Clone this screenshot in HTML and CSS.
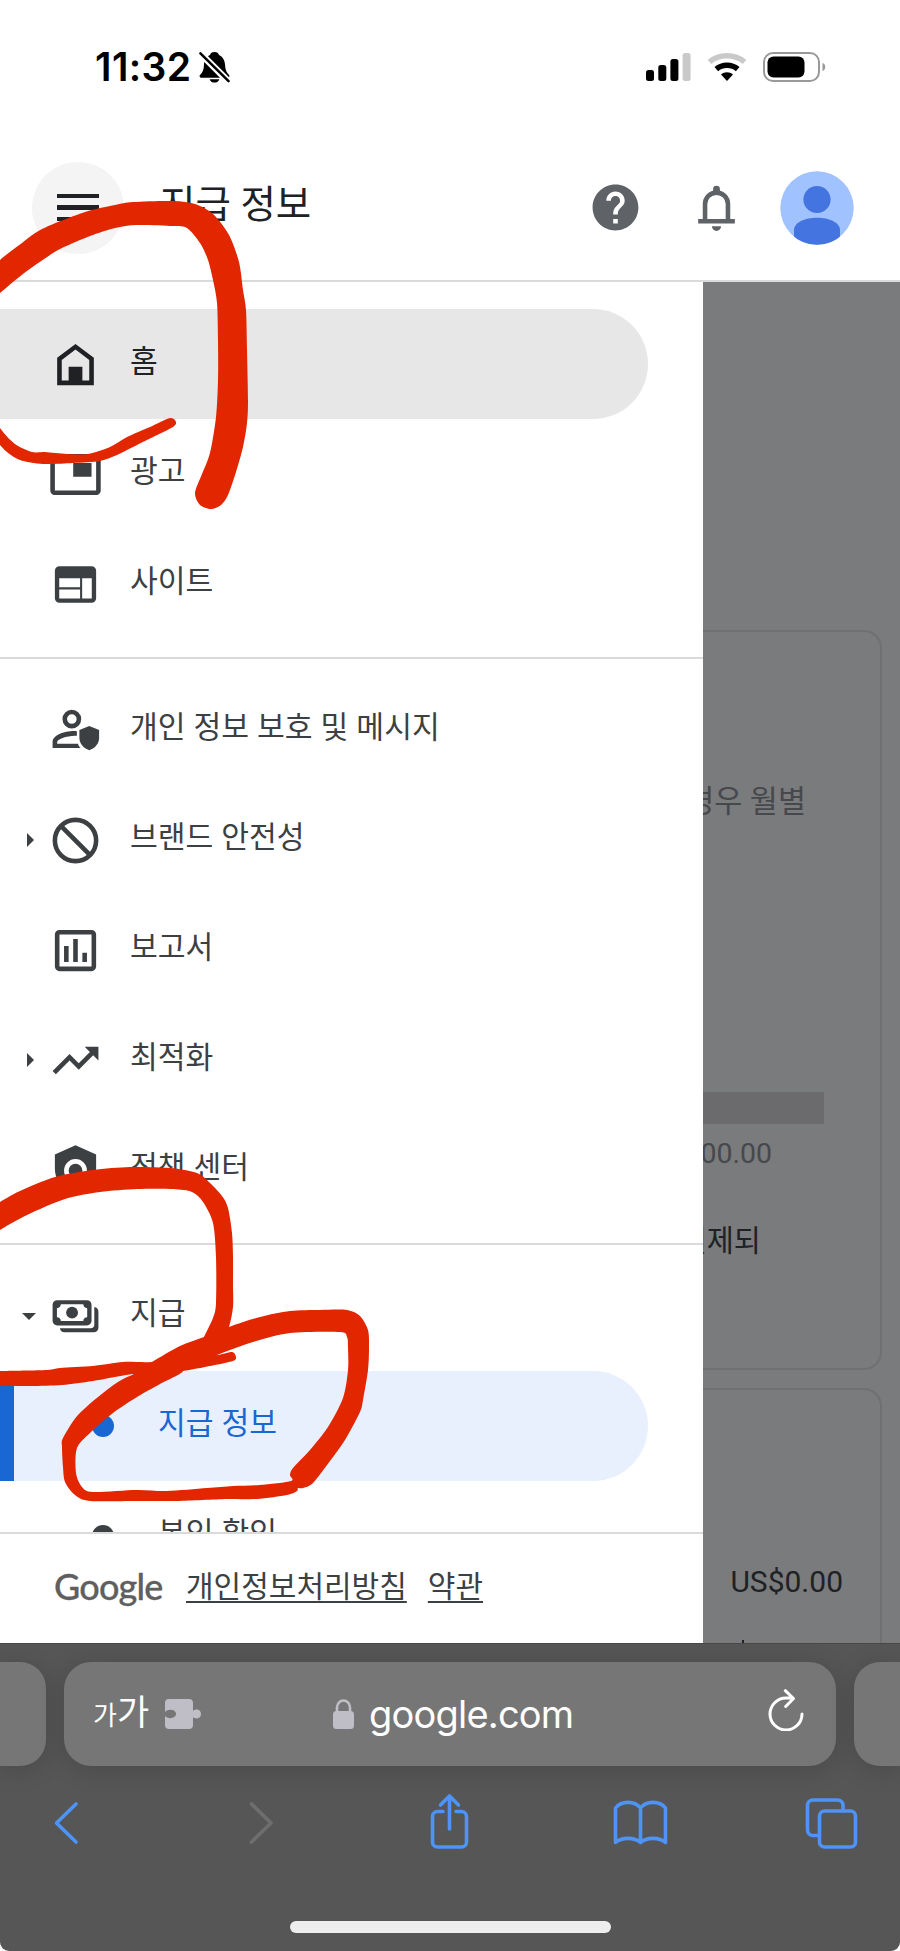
FILE: index.html
```html
<!DOCTYPE html>
<html lang="ko">
<head>
<meta charset="utf-8">
<title>지급 정보</title>
<link rel="stylesheet" href="styles.css">
</head>
<body>
<div class="phone">
  <header class="top">
    <div class="status">
      <span class="time">11:32</span>
      <svg class="mute" viewBox="0 0 32 34"><path d="M16 1c2.600 0 4.200 1.300 4.600 3 4.400 1.900 6 6 6.300 10.500.2 5 1.500 8 4.100 10.200.8.900.4 2.800-1.500 2.800H2.500C.6 27.500.2 25.600 1 24.700 3.800 22.300 5 19.300 5.100 14.500 5.400 10 7 5.900 11.400 4 11.800 2.300 13.400 1 16 1zM11 29h10c-.6 2.200-2.600 3.600-5 3.600s-4.400-1.400-5-3.600z"/><path class="mute-gap" d="M1 2l30 30"/><path class="mute-line" d="M1.500 2.500l29 28.500"/></svg>
      <svg class="signal" viewBox="0 0 45 30"><rect x="0" y="18" width="8" height="11" rx="2.500"/><rect x="12.300" y="13" width="8" height="16" rx="2.500"/><rect x="24.400" y="7" width="8" height="22" rx="2.500"/><rect class="faint" x="36.600" y="1" width="8" height="28" rx="2.500"/></svg>
      <svg class="wifi" viewBox="0 0 40 30"><path class="arc faint-line" d="M2.500 10C12 1.700 28 1.700 37.500 10"/><path class="arc" d="M9.300 17.200c6-5.200 15.400-5.200 21.400 0"/><path d="M20 29l-6-6.500c3.500-3 8.500-3 12 0z"/></svg>
      <svg class="battery" viewBox="0 0 63 30"><rect class="shell" x="1" y="1" width="55" height="28" rx="9"/><rect x="4.500" y="4.500" width="37" height="21" rx="6"/><path class="cap" d="M59.500 11c3.700 1 3.700 7 0 8z"/></svg>
    </div>
    <div class="appbar">
      <button class="menu-btn" aria-label="메뉴"><i></i><i></i><i></i></button>
      <h1>지급 정보</h1>
      <svg class="ico help" viewBox="0 0 24 24"><path d="M12 2C6.480 2 2 6.480 2 12s4.480 10 10 10 10-4.480 10-10S17.520 2 12 2zm1 17h-2v-2h2v2zm2.070-7.750l-.9.920C13.450 12.900 13 13.500 13 15h-2v-.5c0-1.100.45-2.100 1.170-2.830l1.240-1.260c.37-.36.590-.86.590-1.410 0-1.100-.9-2-2-2s-2 .9-2 2H8c0-2.210 1.790-4 4-4s4 1.790 4 4c0 .88-.36 1.680-.93 2.250z"/></svg>
      <svg class="ico bell" viewBox="0 0 24 24"><path class="line" d="M7 17.300V10.500a5 5 0 0 1 10 0v6.800"/><path d="M4 17h16v2H4zM10.500 5.500V4a1.500 1.500 0 0 1 3 0v1.500zM10 20.200h4a2 2 0 0 1-4 0z"/></svg>
      <svg class="avatar" viewBox="0 0 74 74"><defs><clipPath id="face"><circle cx="37" cy="37" r="36.700"/></clipPath></defs><g clip-path="url(#face)"><path class="av-bg" d="M0 0h74v74H0z"/><circle cx="37" cy="28.500" r="13.600"/><path d="M14 74V59c0-7.500 11-12.300 23-12.300S60 51.500 60 59v15z"/></g></svg>
    </div>
  </header>

  <div class="stage">
    <main class="page">
      <section class="card card-a">
        <p class="note">경우 월별</p>
        <div class="meter"></div>
        <p class="amount">00.00</p>
        <p class="sum">결제되</p>
      </section>
      <section class="card card-b">
        <p class="total">US$0.00</p>
        <i class="tick"></i>
      </section>
    </main>

    <nav class="drawer">
      <div class="list">
        <a class="row home"><span class="caret"></span><svg class="ico" viewBox="0 0 24 24"><path fill-rule="evenodd" d="M12 3L4 9v12h16V9zM6 19V10l6-4.500 6 4.500v9h-3v-6H9v6z"/></svg><span>홈</span></a>
        <a class="row"><span class="caret"></span><svg class="ico" viewBox="0 0 24 24"><path d="M19 7h-8v6h8V7zm2-4H3c-1.100 0-2 .9-2 2v14c0 1.100.9 1.980 2 1.980h18c1.100 0 2-.88 2-1.980V5c0-1.100-.9-2-2-2zm0 16.010H3V4.980h18v14.030z"/></svg><span>광고</span></a>
        <a class="row"><span class="caret"></span><svg class="ico" viewBox="0 0 24 24"><path fill-rule="evenodd" d="M5 4h14a2 2 0 0 1 2 2v12a2 2 0 0 1-2 2H5a2 2 0 0 1-2-2V6a2 2 0 0 1 2-2zM4.900 9.300v3.900H14V9.300zm0 4.900v3.900H14v-3.900zM14.900 9.300v8.800h4.200V9.300z"/></svg><span>사이트</span></a>
        <hr>
        <a class="row"><span class="caret"></span><svg class="ico" viewBox="0 0 24 24"><circle class="line" cx="10.400" cy="7" r="3.100"/><path d="M12.600 12.300c-4.700-.4-10.600 1.600-10.600 4.700v2.600h12.200c-.6-.6-.9-1.100-1.100-1.800H4V17c0-1.100 4.200-2.900 8.600-2.700z"/><path d="M18 10l4.300 1.800v3.500c0 2.300-1.700 4.500-4.300 5.300-2.600-.8-4.300-3-4.300-5.300v-3.500z"/></svg><span>개인 정보 보호 및 메시지</span></a>
        <a class="row"><span class="caret right"></span><svg class="ico" viewBox="0 0 24 24"><circle class="line" cx="12" cy="12" r="9"/><path class="line" d="M5.500 5.500l13 13"/></svg><span>브랜드 안전성</span></a>
        <a class="row"><span class="caret"></span><svg class="ico" viewBox="0 0 24 24"><path fill-rule="evenodd" d="M5 3h14a2 2 0 0 1 2 2v14a2 2 0 0 1-2 2H5a2 2 0 0 1-2-2V5a2 2 0 0 1 2-2zm0 2v14h14V5z"/><path d="M7 10h2v7H7zM11 7h2v10h-2zM15 13h2v4h-2z"/></svg><span>보고서</span></a>
        <a class="row"><span class="caret right"></span><svg class="ico" viewBox="0 0 24 24"><path d="M16 6l2.290 2.290-4.880 4.880-4-4L2 16.590 3.410 18l6-6 4 4 6.300-6.290L22 12V6z"/></svg><span>최적화</span></a>
        <a class="row"><span class="caret"></span><svg class="ico" viewBox="0 0 24 24"><path fill-rule="evenodd" d="M12 1L3 5v6c0 5.550 3.840 10.740 9 12 5.160-1.260 9-6.450 9-12V5zM12 7a5 5 0 1 1 0 10 5 5 0 0 1 0-10z"/><circle cx="12" cy="12" r="3"/></svg><span>정책 센터</span></a>
        <hr>
        <a class="row"><span class="caret down"></span><svg class="ico" viewBox="0 0 24 24"><path fill-rule="evenodd" d="M4 4.900h13a2 2 0 0 1 2 2v7a2 2 0 0 1-2 2H4a2 2 0 0 1-2-2v-7a2 2 0 0 1 2-2zM5.600 6.700c0 1-.7 1.700-1.700 1.700v3.900c1 0 1.700.7 1.700 1.700h9.800c0-1 .7-1.700 1.700-1.700V8.400c-1 0-1.700-.7-1.700-1.700z"/><circle cx="10.500" cy="10.300" r="2.600"/><path d="M20.200 7.900c1.100.2 1.800.9 1.800 2v7a2 2 0 0 1-2 2H7.200c-1.100 0-1.800-.6-2-1.800h13.500c.9 0 1.500-.6 1.500-1.500z"/></svg><span>지급</span></a>
        <a class="row sub active"><span class="dot"></span><span>지급 정보</span></a>
        <a class="row sub"><span class="dot"></span><span>본인 확인</span></a>
      </div>
      <footer class="legal"><span class="brand">Google</span><a>개인정보처리방침</a><a>약관</a></footer>
    </nav>
  </div>

  <div class="browser">
    <div class="tabs">
      <div class="tab side"></div>
      <div class="tab main-tab">
        <span class="aa"><small>가</small>가</span>
        <svg class="puzzle" viewBox="0 0 36 30"><path d="M4 0h20a4 4 0 0 1 4 4v8c2-2.500 8-2 8 3s-6 5.500-8 3v8a4 4 0 0 1-4 4H4a4 4 0 0 1-4-4v-9c3 3.600 11 2.500 11-2S3 9.400 0 13V4a4 4 0 0 1 4-4z"/></svg>
        <svg class="lock" viewBox="0 0 21 30"><rect x="0" y="12" width="21" height="18" rx="3.500"/><path class="shackle" d="M4 13V8.500a6.500 7 0 0 1 13 0V13"/></svg>
        <span class="url">google.com</span>
        <svg class="reload" viewBox="0 0 36 42"><path d="M34 25A16 16 0 1 1 18 9H25M17.300 1.700L25.500 9.500l-7.800 8"/></svg>
      </div>
      <div class="tab side"></div>
    </div>
    <div class="tools">
      <svg class="tool" viewBox="0 0 60 60"><path d="M36 11L16.500 30 36 49"/></svg>
      <svg class="tool dim" viewBox="0 0 60 60"><path d="M21.500 11L41 30 21.500 49"/></svg>
      <svg class="tool" viewBox="0 0 60 60"><path d="M23 18.500h-5.500a5 5 0 0 0-5 5V49a5 5 0 0 0 5 5h24a5 5 0 0 0 5-5V23.500a5 5 0 0 0-5-5H36M29.500 36V4M20.500 12L29.500 3l9 9"/></svg>
      <svg class="tool" viewBox="0 0 60 60"><path d="M30.500 15c-6-7.500-19-7.500-25 0v34.500c6-5.500 19-5.500 25 0 6-5.500 19-5.500 25 0V15c-6-7.500-19-7.500-25 0v34"/></svg>
      <svg class="tool" viewBox="0 0 60 60"><path d="M18 42.500h-5A5.500 5.500 0 0 1 7.500 37V12.500A5.500 5.500 0 0 1 13 7h24.500a5.500 5.500 0 0 1 5.500 5.500v5"/><rect x="19.500" y="18" width="36" height="36" rx="5"/></svg>
    </div>
    <div class="home-bar"></div>
  </div>

  <svg class="ink" viewBox="0 0 900 1951">
    <path data-points="-20,280 0,260 22,243 42,229 85,212 115,205 133,202 173,201 195,204 213,214 229,235 239,262 243,290 246,310 247,350 248,400 247,423 243,447 236,472 228,495 221,505 211,509 200,505 195,493 202,474 210,453 216,417 218,380 218,340 217,303 213,280 208,260 200,243 187,228 173,226 137,225 115,228 90,236 62,248 50,255 23,274 0,293 -20,310"/>
    <path data-points="-12,405 0,428 15,444 32,452 45,452 67,454 88,454 110,447 127,437 150,427 170,418 176,422 173,427 155,436 133,447 117,455 100,461 73,463 43,464 20,460 7,452 0,445 -12,430"/>
    <path data-points="-15,1212 0,1202 20,1191 55,1177 93,1170 130,1167 170,1168 197,1173 210,1183 222,1196 228,1208 232,1233 233,1257 233,1285 233,1307 229,1327 220,1350 198,1352 204,1337 213,1318 216,1303 216,1257 213,1223 203,1202 192,1192 173,1189 137,1189 100,1192 65,1199 27,1215 0,1230 -15,1240"/>
    <path data-points="-10,1371 0,1371 47,1370 60,1368 93,1366 123,1362 152,1362 185,1356 217,1355 232,1352 236,1357 233,1361 210,1366 183,1371 155,1374 133,1374 93,1381 62,1385 30,1386 0,1386 -10,1386"/>
    <path data-points="133,1374 152,1362 180,1346 204,1337 229,1327 260,1317 290,1311 320,1310 347,1310 360,1316 368,1330 369,1347 368,1370 363,1400 360,1412 345,1440 330,1461 313,1483 303,1488 298,1488 297,1491 287,1495 257,1499 227,1499 177,1501 137,1501 90,1501 75,1495 65,1482 63,1467 62,1447 63,1438 78,1415 103,1393 125,1378 160,1366 183,1371 160,1384 137,1397 113,1413 92,1431 77,1448 76,1473 82,1487 93,1492 137,1490 167,1491 207,1488 233,1486 260,1485 291,1481 290,1475 293,1468 310,1450 328,1427 343,1398 348,1370 348,1347 347,1337 340,1332 290,1333 253,1342 217,1355 183,1369 150,1375"/>
  </svg>
</div>
<script src="ink.js"></script>
</body>
</html>
```
FILE: ink.js
```js
// Turns each list of outline points into a smooth closed marker stroke.
document.querySelectorAll('.ink path').forEach(function (path) {
  var p = path.dataset.points.split(' ').map(function (s) { return s.split(',').map(Number); });
  var n = p.length;
  var d = 'M' + p[0];
  for (var i = 0; i < n; i++) {
    var a = p[(i + n - 1) % n], b = p[i], c = p[(i + 1) % n], e = p[(i + 2) % n];
    var k = 0.14;
    d += 'C' + [b[0] + (c[0] - a[0]) * k, b[1] + (c[1] - a[1]) * k,
      c[0] - (e[0] - b[0]) * k, c[1] - (e[1] - b[1]) * k, c[0], c[1]].join(' ');
  }
  path.setAttribute('d', d + 'Z');
});
```
FILE: styles.css
```css
* { box-sizing: border-box; }
body { margin: 0; background: #fff; font-family: Roboto, "Noto Sans CJK KR", sans-serif; }
p, h1 { margin: 0; font-weight: 400; }
svg { display: block; flex: none; }
.phone { position: relative; width: 900px; height: 1951px; overflow: hidden; display: flex; flex-direction: column; }

.top { height: 282px; border-bottom: 2px solid #dadada; background: #fff; }
.status { display: flex; align-items: center; height: 134px; padding: 0 74px 0 95px; }
.time { width: 97px; font: 600 39px/40px Inter, sans-serif; letter-spacing: 0.4px; white-space: nowrap; }
.mute { width: 31px; height: 33px; margin-left: 7px; }
.mute-gap { stroke: #fff; stroke-width: 7; }
.mute-line { stroke: #000; stroke-width: 2.6; stroke-linecap: round; }
.signal { width: 45px; height: 30px; margin-left: auto; }
.faint { fill: #c9c9c9; }
.wifi { width: 40px; height: 30px; margin-left: 16px; }
.arc { fill: none; stroke: #000; stroke-width: 5.5; }
.faint-line { stroke: #c9c9c9; }
.battery { width: 63px; height: 30px; margin-left: 16px; }
.shell { fill: none; stroke: #999; stroke-width: 2; }
.cap { fill: #999; }

.appbar { display: flex; align-items: center; height: 147px; padding: 0 46px 0 32px; }
.menu-btn { display: flex; flex-direction: column; align-items: center; justify-content: center; gap: 7px; width: 92px; height: 92px; border: 0; padding: 0; border-radius: 50%; background: #f4f4f4; }
.menu-btn i { width: 42px; height: 4.500px; background: #202124; }
.appbar h1 { margin: -5px auto 0 36px; font-size: 38.500px; line-height: 50px; color: #202124; }
.ico { width: 55px; height: 55px; fill: currentColor; }
.line { fill: none; stroke: currentColor; stroke-width: 2; }
.help, .bell { color: #5f6368; }
.bell { margin-left: 46px; }
.avatar { width: 74px; height: 74px; margin-left: 36px; fill: #4374e0; }
.av-bg { fill: #a0c2ff; }

.stage { position: relative; height: 1361px; overflow: hidden; }
.page { display: flex; flex-direction: column; gap: 18px; height: 1361px; padding: 348px 18px 0 20px; background: #7a7b7d; overflow: hidden; }
.card { flex: none; border: 2px solid #6f7072; border-radius: 18px; display: flex; flex-direction: column; align-items: flex-end; }
.card-a { height: 740px; padding-top: 150px; }
.card-b { height: 400px; padding-top: 170px; }
.note { margin-right: 74px; font-size: 30.500px; line-height: 40px; color: #47484c; }
.meter { width: 600px; height: 32px; margin: 270px 56px 0 0; background: #6b6b6d; }
.amount { margin: 13px 108px 0 0; font-size: 28.500px; line-height: 34px; color: #47484b; }
.sum { margin: 50px 119px 0 0; font-size: 29.500px; line-height: 40px; color: #202124; }
.total { margin-right: 37px; font-size: 30px; line-height: 44px; color: #202124; }
.tick { width: 2px; height: 20px; margin: 36px 136px 0 0; background: #202124; }

.drawer { position: absolute; left: 0; top: 0; width: 703px; height: 1361px; display: flex; flex-direction: column; background: #fff; color: #3c4043; }
.list { height: 1250px; padding-top: 27px; overflow: hidden; }
.row { display: flex; align-items: center; width: 648px; height: 110px; border-radius: 0 55px 55px 0; font-size: 30.200px; line-height: 44px; word-spacing: 0.5px; white-space: nowrap; }
.row > span:last-child { margin: -5px 0 0 27px; }
.home { background: #e7e7e7; color: #202124; }
.caret { width: 48px; display: flex; }
.caret::before { content: ""; margin-left: 27px; }
.right::before { border: 7px solid transparent; border-left-color: currentColor; border-right: 0; }
.down::before { margin-left: 22px; border: 7.500px solid transparent; border-top-color: currentColor; border-bottom: 0; }
.list hr { margin: 17.500px 0 16.700px; border: 0; height: 2px; background: #dadada; }
.sub { padding-left: 92px; }
.row.sub > span:last-child { margin-left: 44px; }
.dot { width: 22px; height: 22px; border-radius: 50%; background: currentColor; }
.active { padding-left: 78px; border-left: 14px solid #1967d2; background: #e8f0fe; color: #1967d2; border-radius: 0 55px 55px 0; }
.legal { display: flex; align-items: center; flex: 1; border-top: 2px solid #dadada; padding-left: 54px; font-size: 30px; line-height: 44px; white-space: nowrap; }
.legal a { text-decoration: underline; text-decoration-thickness: 2px; text-underline-offset: 4px; margin: -4px 21px 0 0; }
.brand { width: 132px; margin-top: -5px; font: 500 36px/44px Lato, sans-serif; letter-spacing: -0.8px; color: #5f5f5f; -webkit-text-stroke: 0.3px #5f5f5f; }

.browser { position: relative; height: 308px; overflow: hidden; border-top: 1px solid #484848; border-radius: 0 0 9px 9px; background: #565656; display: flex; flex-direction: column; align-items: center; }
.tabs { display: flex; justify-content: space-between; width: 900px; padding-top: 18px; }
.tab { height: 104px; background: #767676; box-shadow: 0 4px 26px rgba(0, 0, 0, 0.14); }
.side { width: 46px; border-radius: 0 26px 26px 0; }
.side:last-child { border-radius: 26px 0 0 26px; }
.main-tab { width: 772px; border-radius: 27px; display: flex; align-items: center; padding: 0 32px 0 29px; color: #fff; }
.aa { width: 72px; font: 400 35px/48px "Noto Sans CJK KR", sans-serif; white-space: nowrap; margin-top: -4px; }
.aa small { font-size: 26px; }
.puzzle { width: 36px; height: 30px; fill: #bfbec6; }
.lock { width: 21px; height: 30px; margin-left: 132px; margin-top: -1px; fill: #bfbec6; }
.shackle { fill: none; stroke: #bfbec6; stroke-width: 2.6; }
.url { margin: 0 auto 0 15px; font: 400 38px/46px Inter, sans-serif; letter-spacing: -0.8px; }
.reload { width: 36px; height: 42px; margin-top: -8px; fill: none; stroke: #fff; stroke-width: 3; stroke-linecap: round; stroke-linejoin: round; }
.tools { display: flex; justify-content: space-between; width: 900px; padding: 27px 40px 0; }
.tool { width: 60px; height: 60px; fill: none; stroke: #4d93f8; stroke-width: 3.600; stroke-linecap: round; stroke-linejoin: round; }
.dim { stroke: #6e6e6e; }
.home-bar { width: 321px; height: 12px; margin-top: 68px; border-radius: 6px; background: #eee; }

.ink { position: absolute; left: 0; top: 0; width: 900px; height: 1951px; fill: #e12600; pointer-events: none; }
```
